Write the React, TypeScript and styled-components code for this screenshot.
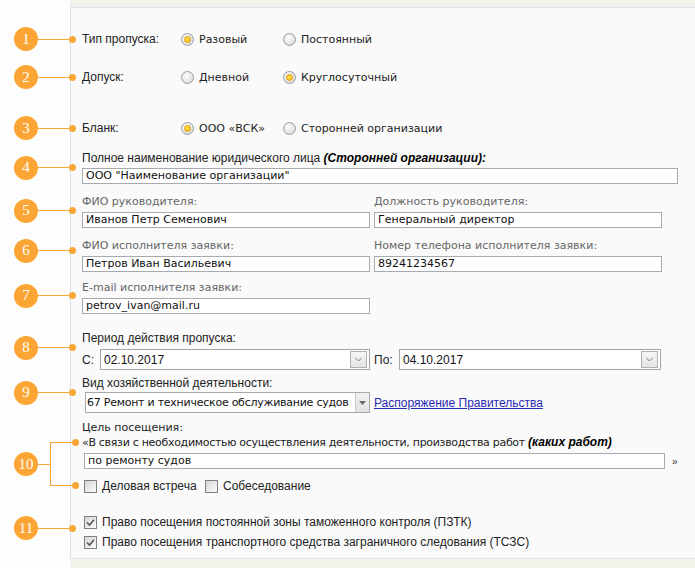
import React from 'react'
import styled, { createGlobalStyle } from 'styled-components'

const tahoma = `"Liberation Sans", Arial, sans-serif`
const verdana = `"DejaVu Sans", Verdana, sans-serif`
const orange = '#f9a637'

const GlobalStyle = createGlobalStyle`
  html, body { margin: 0; padding: 0; background: #f3f3ec; }
  body { width: 695px; height: 568px; overflow: hidden; }
`

const Page = styled.div`
  display: flex;
  height: 568px;
`

const Gutter = styled.div`
  width: 70px;
  flex-shrink: 0;
  background: #fdfdfd;
`

const PanelWrap = styled.div`
  flex: 1;
  display: flex;
  padding: 7px 6px 9px 0;
`

const Panel = styled.div`
  flex: 1;
  border: 1px solid #dde3e8;
  background: #fafafa;
  padding: 21px 26px 0 11px;
  color: #222;
`

const Section = styled.div<{ $mt?: number }>`
  position: relative;
  margin-top: ${p => p.$mt ?? 0}px;
`

/* callouts */
const Callout = styled.div<{ $shift?: number }>`
  position: absolute;
  left: -68px;
  top: calc(50% + ${p => p.$shift ?? 0}px);
  transform: translateY(-50%);
  width: 62px;
  display: flex;
  align-items: center;
  pointer-events: none;
`

const Bubble = styled.span`
  width: 24px;
  height: 24px;
  border-radius: 50%;
  background: #fba634;
  color: #fff;
  font: 15px "Liberation Serif", serif;
  display: flex;
  align-items: center;
  justify-content: center;
  flex-shrink: 0;
`

const Lead = styled.span<{ $w?: number }>`
  flex: ${p => (p.$w ? `0 0 ${p.$w}px` : '1')};
  height: 1px;
  background: ${orange};
`

const Dot = styled.span`
  width: 7px;
  height: 7px;
  border-radius: 50%;
  background: ${orange};
  flex-shrink: 0;
`

const BracketCallout = styled.div`
  position: absolute;
  left: -68px;
  top: 7px;
  bottom: 8px;
  width: 62px;
  display: flex;
  align-items: center;
  pointer-events: none;
`

const Bracket = styled.span`
  align-self: stretch;
  flex: 1;
  position: relative;
  border: 1px solid ${orange};
  border-right: none;
  margin-right: 3px;
  &::before, &::after {
    content: '';
    position: absolute;
    right: -6px;
    width: 7px;
    height: 7px;
    border-radius: 50%;
    background: ${orange};
  }
  &::before { top: -4px; }
  &::after { bottom: -4px; }
`

/* radio rows */
const RadioRow = styled.div`
  display: flex;
  align-items: center;
  height: 20px;
`

const RowLabel = styled.span`
  width: 99px;
  font: 12px ${tahoma};
  color: #222;
`

const Option = styled.label`
  width: 102px;
  display: flex;
  align-items: center;
  gap: 5px;
  font: 11px ${verdana};
  color: #222;
  white-space: nowrap;
`

const Radio = styled.span<{ $on?: boolean }>`
  width: 13px;
  height: 13px;
  box-sizing: border-box;
  border-radius: 50%;
  border: 1px solid #9c9c9c;
  background: radial-gradient(circle at 40% 35%, #fefefe, #d2d2d2);
  display: flex;
  align-items: center;
  justify-content: center;
  flex-shrink: 0;
  &::after {
    content: '';
    display: ${p => (p.$on ? 'block' : 'none')};
    width: 7px;
    height: 7px;
    border-radius: 50%;
    box-sizing: border-box;
    border: 1px solid #e59a00;
    background: radial-gradient(circle at 45% 40%, #ffe25a, #f4b400);
  }
`

/* fields */
const FieldLabel = styled.div<{ $grey?: boolean; $verdana?: boolean }>`
  font: ${p => (p.$grey || p.$verdana ? `11px ${verdana}` : `12px ${tahoma}`)};
  color: ${p => (p.$grey ? '#666' : '#222')};
  line-height: 14px;
  white-space: nowrap;
`

const Strong = styled.b`
  font-style: italic;
  color: #000;
`

const Input = styled.div<{ $w?: number }>`
  box-sizing: border-box;
  width: ${p => (p.$w ? `${p.$w}px` : '100%')};
  height: 16px;
  margin-top: 3px;
  border: 1px solid #a7abb0;
  background: #fff;
  padding: 0 3px;
  font: 11px ${verdana};
  line-height: 14px;
  color: #111;
  white-space: nowrap;
  overflow: hidden;
`

const Pair = styled.div`
  display: grid;
  grid-template-columns: 288px 288px;
  column-gap: 4px;
`

/* selects */
const SelectRow = styled.div<{ $mt: number }>`
  display: flex;
  align-items: center;
  margin-top: ${p => p.$mt}px;
  font: 12px ${tahoma};
`

const Prefix = styled.span<{ $w: number; $ml?: number }>`
  width: ${p => p.$w}px;
  margin-left: ${p => p.$ml ?? 0}px;
  flex-shrink: 0;
`

const DateBox = styled.div<{ $w: number }>`
  box-sizing: border-box;
  width: ${p => p.$w}px;
  height: 21px;
  border: 1px solid #a4a4a4;
  background: #fff;
  display: flex;
  align-items: center;
  justify-content: space-between;
  padding: 0 2px 0 3px;
  font: 12px ${tahoma};
  color: #111;
`

const DropBtn = styled.span`
  box-sizing: border-box;
  width: 17px;
  height: 17px;
  border: 1px solid #b2b2b2;
  background: linear-gradient(#f6f6f6, #e4e4e4);
  display: flex;
  align-items: center;
  justify-content: center;
`

const ComboBox = styled.div`
  box-sizing: border-box;
  width: 285px;
  height: 21px;
  margin-left: 3px;
  border: 1px solid #a9a9a9;
  background: #fff;
  display: flex;
  align-items: center;
  font: 11px ${verdana};
  letter-spacing: -0.25px;
  color: #111;
  overflow: hidden;
`

const ComboText = styled.span`
  flex: 1;
  padding-left: 1px;
  white-space: nowrap;
  overflow: hidden;
`

const ComboBtn = styled.span`
  width: 13px;
  align-self: stretch;
  border-left: 1px solid #c6c6c6;
  background: linear-gradient(#f2f2f2, #e2e2e2);
  display: flex;
  align-items: center;
  justify-content: center;
`

const Link = styled.a`
  margin-left: 4px;
  font: 12px ${tahoma};
  color: #2a2ab8;
  text-decoration: underline;
`

/* goal section */
const Group = styled.div`
  position: relative;
`

const QuoteLine = styled.div`
  font: 11px ${verdana};
  letter-spacing: -0.3px;
  line-height: 14px;
  color: #222;
  white-space: nowrap;
`

const QuoteStrong = styled.b`
  font: italic bold 12px ${tahoma};
  letter-spacing: 0;
  color: #000;
`

const InputRow = styled.div`
  display: flex;
  align-items: center;
  padding-left: 2px;
`

const Close = styled.span`
  margin: 3px 0 0 7px;
  font: 10px ${tahoma};
  color: #333;
`

const CheckRow = styled.div<{ $mt: number }>`
  display: flex;
  align-items: center;
  height: 16px;
  margin-top: ${p => p.$mt}px;
  padding-left: 2px;
`

const Check = styled.label<{ $w?: number }>`
  display: flex;
  align-items: center;
  gap: 5px;
  width: ${p => (p.$w ? `${p.$w}px` : 'auto')};
  font: 12px ${tahoma};
  color: #222;
  white-space: nowrap;
`

const Box = styled.span`
  width: 13px;
  height: 13px;
  box-sizing: border-box;
  border: 1px solid #7f7f7f;
  background: linear-gradient(135deg, #d6d6d6, #fbfbfb);
  display: flex;
  align-items: center;
  justify-content: center;
  flex-shrink: 0;
`

const Chevron = () => (
  <svg width="11" height="11" viewBox="0 0 11 11">
    <path d="M2.5 4 L5.5 7 L8.5 4" fill="none" stroke="#7a7a7a" strokeWidth="1" />
  </svg>
)

const Triangle = () => (
  <svg width="7" height="4" viewBox="0 0 7 4">
    <path d="M0 0 H7 L3.5 4 Z" fill="#6a6a6a" />
  </svg>
)

const CheckBox = ({ on }: { on?: boolean }) => (
  <Box>
    {on && (
      <svg width="11" height="11" viewBox="0 0 11 11">
        <path d="M2 5.5 L4.5 8 L9 2.8" fill="none" stroke="#555" strokeWidth="1.6" />
      </svg>
    )}
  </Box>
)

const Mark = ({ n, shift }: { n: number; shift?: number }) => (
  <Callout $shift={shift}>
    <Bubble>{n}</Bubble>
    <Lead />
    <Dot />
  </Callout>
)

const App = () => {
  return (
    <>
      <GlobalStyle />
      <Page>
        <Gutter />
        <PanelWrap>
          <Panel>
            <Section>
              <Mark n={1} />
              <RadioRow>
                <RowLabel>Тип пропуска:</RowLabel>
                <Option><Radio $on />Разовый</Option>
                <Option><Radio />Постоянный</Option>
              </RadioRow>
            </Section>

            <Section $mt={18}>
              <Mark n={2} />
              <RadioRow>
                <RowLabel>Допуск:</RowLabel>
                <Option><Radio />Дневной</Option>
                <Option><Radio $on />Круглосуточный</Option>
              </RadioRow>
            </Section>

            <Section $mt={31}>
              <Mark n={3} />
              <RadioRow>
                <RowLabel>Бланк:</RowLabel>
                <Option><Radio $on />ООО «ВСК»</Option>
                <Option><Radio />Сторонней организации</Option>
              </RadioRow>
            </Section>

            <Section $mt={13}>
              <Mark n={4} />
              <FieldLabel>
                Полное наименование юридического лица <Strong>(Сторонней организации):</Strong>
              </FieldLabel>
              <Input>ООО "Наименование организации"</Input>
            </Section>

            <Section $mt={11}>
              <Mark n={5} shift={-1} />
              <Pair>
                <div>
                  <FieldLabel $grey>ФИО руководителя:</FieldLabel>
                  <Input>Иванов Петр Семенович</Input>
                </div>
                <div>
                  <FieldLabel $grey>Должность руководителя:</FieldLabel>
                  <Input>Генеральный директор</Input>
                </div>
              </Pair>
            </Section>

            <Section $mt={11}>
              <Mark n={6} shift={-5} />
              <Pair>
                <div>
                  <FieldLabel $grey>ФИО исполнителя заявки:</FieldLabel>
                  <Input>Петров Иван Васильевич</Input>
                </div>
                <div>
                  <FieldLabel $grey>Номер телефона исполнителя заявки:</FieldLabel>
                  <Input>89241234567</Input>
                </div>
              </Pair>
            </Section>

            <Section $mt={9}>
              <Mark n={7} shift={-2} />
              <FieldLabel $grey>E-mail исполнителя заявки:</FieldLabel>
              <Input $w={288}>petrov_ivan@mail.ru</Input>
            </Section>

            <Section $mt={17}>
              <Mark n={8} shift={-3} />
              <FieldLabel>Период действия пропуска:</FieldLabel>
              <SelectRow $mt={4}>
                <Prefix $w={18}>С:</Prefix>
                <DateBox $w={270}>
                  02.10.2017
                  <DropBtn><Chevron /></DropBtn>
                </DateBox>
                <Prefix $w={25} $ml={4}>По:</Prefix>
                <DateBox $w={262}>
                  04.10.2017
                  <DropBtn><Chevron /></DropBtn>
                </DateBox>
              </SelectRow>
            </Section>

            <Section $mt={6}>
              <Mark n={9} shift={-2} />
              <FieldLabel>Вид хозяйственной деятельности:</FieldLabel>
              <SelectRow $mt={2}>
                <ComboBox>
                  <ComboText>67 Ремонт и техническое обслуживание судов</ComboText>
                  <ComboBtn><Triangle /></ComboBtn>
                </ComboBox>
                <Link href="#">Распоряжение Правительства</Link>
              </SelectRow>
            </Section>

            <Section $mt={8}>
              <FieldLabel $verdana>Цель посещения:</FieldLabel>
              <Group>
                <BracketCallout>
                  <Bubble>10</Bubble>
                  <Lead $w={12} />
                  <Bracket />
                </BracketCallout>
                <QuoteLine>
                  «В связи с необходимостью осуществления деятельности, производства работ{' '}
                  <QuoteStrong>(каких работ)</QuoteStrong>
                </QuoteLine>
                <InputRow>
                  <Input $w={581}>по ремонту судов</Input>
                  <Close>»</Close>
                </InputRow>
                <CheckRow $mt={9}>
                  <Check $w={121}><CheckBox />Деловая встреча</Check>
                  <Check><CheckBox />Собеседование</Check>
                </CheckRow>
              </Group>
            </Section>

            <Section $mt={20}>
              <Mark n={11} shift={-4} />
              <CheckRow $mt={0}>
                <Check><CheckBox on />Право посещения постоянной зоны таможенного контроля (ПЗТК)</Check>
              </CheckRow>
              <CheckRow $mt={4}>
                <Check><CheckBox on />Право посещения транспортного средства заграничного следования (ТСЗС)</Check>
              </CheckRow>
            </Section>
          </Panel>
        </PanelWrap>
      </Page>
    </>
  )
}

export default App
